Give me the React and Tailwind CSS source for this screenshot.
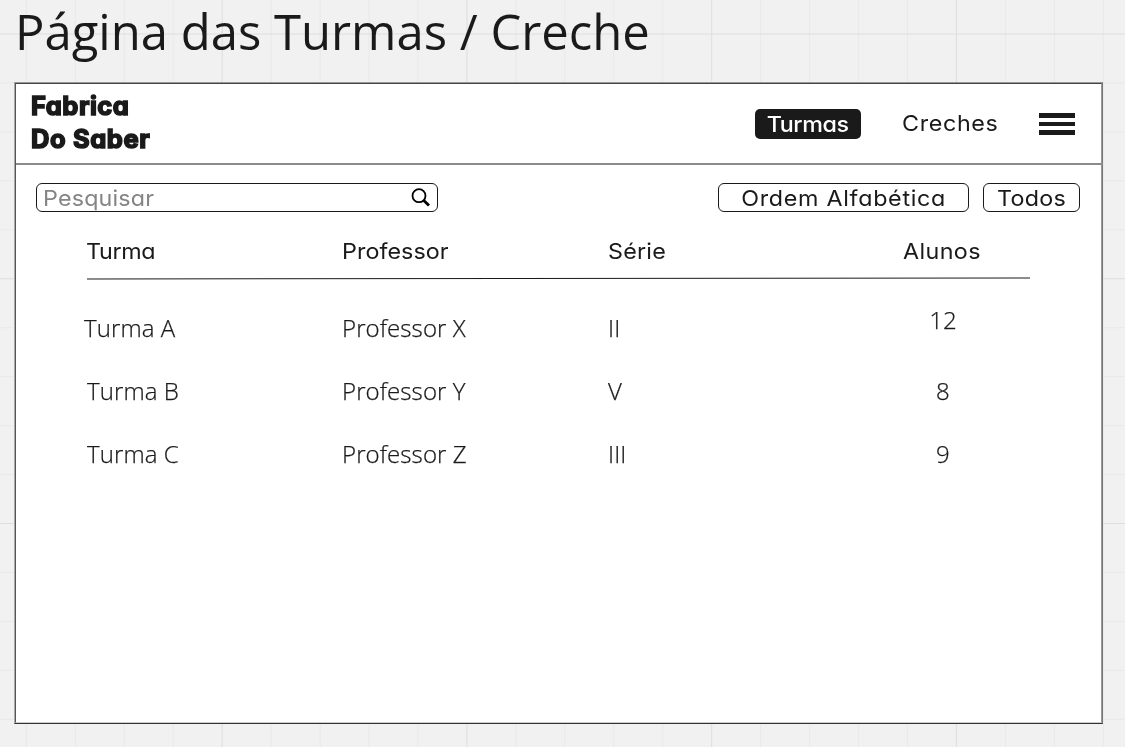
const STEP = 48.95;

const shape = "font-['Inter',sans-serif] [font-feature-settings:'cv11','ss03']";

function CanvasGrid() {
  const columns = Array.from({ length: 23 }, (_, i) => i);
  const rows = Array.from({ length: 16 }, (_, i) => i);
  return (
    <svg className="absolute inset-0" width="1125" height="747" aria-hidden="true">
      {columns.map((i) => (
        <line key={i} x1={26.4 + i * STEP} x2={26.4 + i * STEP} y1="0" y2="747" stroke={i % 5 === 4 ? "#dedede" : "#e9e9e9"} />
      ))}
      {rows.map((i) => (
        <line key={i} x1="0" x2="1125" y1={34 + i * STEP} y2={34 + i * STEP} stroke={i % 5 === 0 ? "#dedede" : "#e9e9e9"} />
      ))}
    </svg>
  );
}

// Label in a slightly extended width.
function Wide({ className = "", children }) {
  return <span className={`inline-block scale-x-[1.06] whitespace-nowrap ${className}`}>{children}</span>;
}

function Header() {
  return (
    <header className="-mr-[2px] flex h-[81px] border-b-2 border-[#8b8b8b]">
      <div className="w-[739px] pt-[5px] pl-[15px] font-['Inter',sans-serif] text-[25.5px] leading-[33px] font-bold [-webkit-text-stroke:1.6px_#1a1a1a] [font-feature-settings:'cv11'] [stroke-linejoin:round]">
        <div className="tracking-[0.5px]">Fabrica</div>
        <div className="tracking-[0.6px]">Do Saber</div>
      </div>
      <nav className={`flex flex-1 ${shape} text-[22px] leading-[30px]`}>
        <a className="mt-[25px] h-[30px] w-[106px] rounded-[5px] bg-[#1a1a1a] text-center font-medium text-white">
          <Wide className="tracking-[-0.4px]">Turmas</Wide>
        </a>
        <a className="mt-[24px] ml-[41px] w-[98px] font-[370]">
          <Wide className="origin-left tracking-[0.6px]">Creches</Wide>
        </a>
        <div className="mt-[29px] ml-[39px] flex w-[36px] flex-col gap-[4px]">
          <span className="h-[4.5px] bg-[#1a1a1a]" />
          <span className="h-[4.5px] bg-[#1a1a1a]" />
          <span className="h-[4.5px] bg-[#1a1a1a]" />
        </div>
      </nav>
    </header>
  );
}

function Toolbar() {
  return (
    <div className={`flex pt-[18px] pl-[20px] ${shape} text-[22px] leading-[29px] font-[370]`}>
      <div className="flex h-[29px] w-[402px] justify-between rounded-[6px] border border-[#1a1a1a] pr-[6px] pl-[6px] leading-[28px]">
        <Wide className="origin-left tracking-[0.15px] text-[#858585]">Pesquisar</Wide>
        <svg className="mt-[4px]" width="20" height="20" viewBox="0 0 20 20" fill="none" stroke="#000">
          <circle cx="8" cy="7.7" r="6.5" strokeWidth="1.8" />
          <path d="M12.5 12.2 18 17.6" strokeWidth="2.8" />
        </svg>
      </div>
      <button className="ml-[280px] h-[29px] w-[251px] rounded-[6px] border border-[#1a1a1a] leading-[28px]">
        <Wide className="tracking-[0.65px]">Ordem Alfabética</Wide>
      </button>
      <button className="ml-[14px] h-[29px] w-[97px] rounded-[6px] border border-[#1a1a1a] leading-[28px]">
        <Wide className="tracking-[0.2px]">Todos</Wide>
      </button>
    </div>
  );
}

const classes = [
  { name: "Turma A", teacher: "Professor X", grade: "II", students: "12", nameClass: "-ml-[3px]", countClass: "-mt-[8px]" },
  { name: "Turma B", teacher: "Professor Y", grade: "V", students: "8", nameClass: "", countClass: "" },
  { name: "Turma C", teacher: "Professor Z", grade: "III", students: "9", nameClass: "", countClass: "" },
];

function ClassTable() {
  return (
    <section className="pl-[71px]">
      <div className={`mt-[24px] grid h-[30px] grid-cols-[255px_266px_246px_176px] ${shape} text-[22px] leading-[30px] font-[370]`}>
        <Wide className="-ml-px origin-left tracking-[-0.35px]">Turma</Wide>
        <Wide className="origin-left tracking-[0.05px]">Professor</Wide>
        <Wide className="origin-left tracking-[0.2px]">Série</Wide>
        <Wide className="text-center tracking-[0.35px]">Alunos</Wide>
      </div>
      <svg className="mt-[9px] block" width="944" height="6" fill="none">
        <path d="M0 4 943 3" stroke="#1a1a1a" strokeWidth="1.1" />
      </svg>
      <div className="mt-[15px] font-['Open_Sans',sans-serif] text-[24px] leading-[63px] font-[350] tracking-[0.1px] [-webkit-text-stroke:0.25px_#1a1a1a]">
        {classes.map((row) => (
          <div key={row.name} className="grid h-[63px] grid-cols-[255px_266px_247px_176px]">
            <span className={row.nameClass}>{row.name}</span>
            <span>{row.teacher}</span>
            <span>{row.grade}</span>
            <span className={`text-center ${row.countClass}`}>{row.students}</span>
          </div>
        ))}
      </div>
    </section>
  );
}

export default function App() {
  return (
    <div className="relative h-[747px] w-[1125px] overflow-hidden bg-[#f1f1f1] text-[#1a1a1a]">
      <CanvasGrid />
      <div className="relative pl-[14px] will-change-transform">
        <h1 className="h-[82px] pl-px font-['Open_Sans',sans-serif] text-[49px] leading-[62px] font-normal whitespace-nowrap">Página das Turmas / Creche</h1>
        <main className="h-[642px] w-[1089px] border border-t-[#999] border-r-[#777] border-b-[#333] border-l-[#aaa] bg-white">
          <div className="h-[640px] border border-t-[#444] border-r-[#999] border-b-[#ccc] border-l-[#555]">
            <Header />
            <Toolbar />
            <ClassTable />
          </div>
        </main>
      </div>
    </div>
  );
}
